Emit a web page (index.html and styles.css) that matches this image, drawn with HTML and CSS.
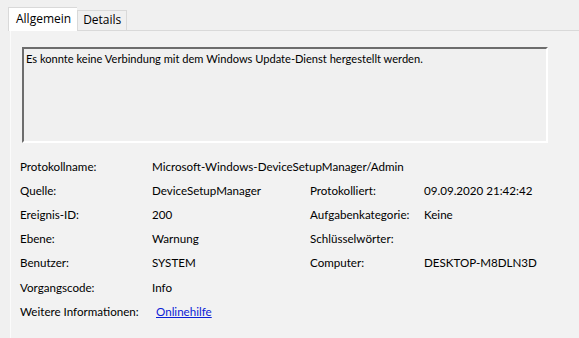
FILE: index.html
```html
<!DOCTYPE html>
<html lang="de">
<head>
    <meta charset="UTF-8">
    <title>Ereigniseigenschaften</title>
    <link rel="stylesheet" href="styles.css">
</head>
<body>
<div class="tabs">
    <div class="tab active">Allgemein</div>
    <div class="tab">Details</div>
</div>
<div class="panel">
    <div class="message">Es konnte keine Verbindung mit dem Windows Update-Dienst hergestellt werden.</div>
    <div class="props">
        <span>Protokollname:</span><span class="wide">Microsoft-Windows-DeviceSetupManager/Admin</span>
        <span>Quelle:</span><span>DeviceSetupManager</span><span>Protokolliert:</span><span>09.09.2020 21:42:42</span>
        <span>Ereignis-ID:</span><span>200</span><span>Aufgabenkategorie:</span><span>Keine</span>
        <span>Ebene:</span><span>Warnung</span><span>Schlüsselwörter:</span><span></span>
        <span>Benutzer:</span><span>SYSTEM</span><span>Computer:</span><span>DESKTOP-M8DLN3D</span>
        <span>Vorgangscode:</span><span class="wide">Info</span>
        <span>Weitere Informationen:</span><span class="wide"><a href="#" class="link">Onlinehilfe</a></span>
    </div>
</div>
</body>
</html>
```

FILE: styles.css
```css
html, body {
    height: 338px;
    overflow: hidden;
}

body {
    margin: 0;
    padding: 7px 0 0 8px;
    box-sizing: border-box;
    background-color: #f0f0f0;
    font-family: 'Lato', sans-serif;
    font-size: 11.6px;
    color: #000;
}

.tabs {
    display: flex;
    align-items: flex-end;
    height: 24px;
    position: relative;
    z-index: 1;
    font-family: 'Open Sans', sans-serif;
    font-size: 12px;
}

.tab {
    height: 19px;
    line-height: 18px;
    padding: 0 5px;
    border: 1px solid #d9d9d9;
    border-bottom: none;
    background-color: #f0f0f0;
    margin-bottom: 1px;
}

.tab.active {
    height: 23px;
    line-height: 22px;
    padding: 0 6px 0 7px;
    background-color: #fff;
    border-right: none;
    margin-bottom: 0;
}

.panel {
    margin-left: 2px;
    margin-top: -1px;
    border-top: 1px solid #d9d9d9;
    border-left: 1px solid #fbfbfb;
    background-color: #f2f2f2;
    padding: 16px 0 0 11px;
    box-sizing: border-box;
    height: 308px;
}

.message {
    width: 518px;
    height: 88px;
    border-top: 2px solid #6d6d6d;
    border-left: 2px solid #6d6d6d;
    border-right: 2px solid #fff;
    border-bottom: 2px solid #fff;
    background-color: #f0f0f0;
    padding: 2px 2px;
    line-height: 16px;
    font-size: 11.1px;
}

.props {
    display: grid;
    grid-template-columns: 132px 158px 114px auto;
    grid-auto-rows: 24.2px;
    align-items: center;
    margin: 11px 0 0 -2px;
}

.props .wide {
    grid-column: 2 / 5;
}

.link {
    color: #0b21d6;
    margin-left: 4px;
}
```
